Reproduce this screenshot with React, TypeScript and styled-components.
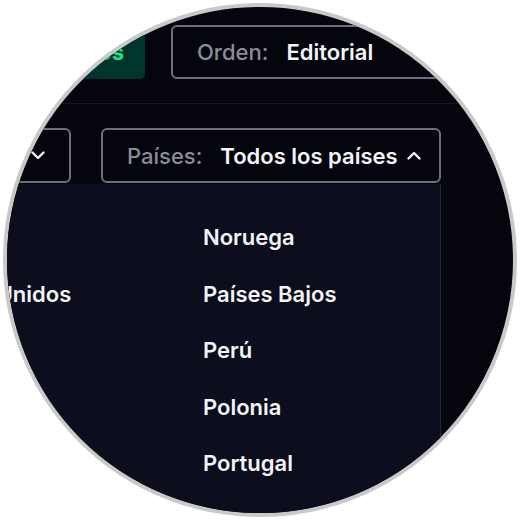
import React from "react";
import styled, { createGlobalStyle } from "styled-components";

const GlobalStyle = createGlobalStyle`
  body {
    margin: 0;
    background: #ffffff;
    font-family: Inter, "Noto Sans", "Liberation Sans", sans-serif;
  }
  * {
    box-sizing: border-box;
  }
`;

const Frame = styled.div`
  width: 514px;
  height: 514px;
  margin: 3px;
  border-radius: 50%;
  border: 4px solid #c9c9c9;
  overflow: hidden;
  background: #05050d;
`;

// the screenshot is a crop of a wider page, so the stage starts left of the circle
const Stage = styled.div`
  width: 720px;
  margin-left: -207px;
  padding-top: 18px;
  display: flex;
  flex-direction: column;
`;

const Row = styled.div<{ $gap: number }>`
  display: flex;
  align-items: stretch;
  gap: ${(p) => p.$gap}px;
`;

const Divider = styled.div`
  height: 1px;
  width: 100%;
  background: #161622;
  margin: 24px 0 24px;
`;

const Pill = styled.button<{ $w: number }>`
  height: 54px;
  width: ${(p) => p.$w}px;
  border-radius: 5px;
  border: none;
  background: #00352d;
  color: #1fe390;
  font-family: inherit;
  font-size: 22px;
  font-weight: 700;
  display: flex;
  align-items: center;
  justify-content: flex-end;
  padding: 0 21px;
`;

const Select = styled.div<{ $w: number; $h: number }>`
  height: ${(p) => p.$h}px;
  width: ${(p) => p.$w}px;
  border: 2px solid #6f6f7d;
  border-radius: 6px;
  display: flex;
  align-items: center;
  padding: 0 24px;
  color: #f2f2f7;
  font-size: 22px;
  font-weight: 600;
  white-space: nowrap;
`;

const Label = styled.span`
  color: #8c8c98;
  font-weight: 500;
  margin-right: 18px;
`;

const Value = styled.span`
  color: #f4f4f8;
`;

const Chevron = styled.svg`
  margin-left: 9px;
  flex: none;
`;

const Spacer = styled.div`
  flex: 1;
`;

const Panel = styled.div`
  margin-top: 1px;
  width: 641px;
  height: 400px;
  background: #0c0d1d;
  border-right: 1px solid #262636;
  display: grid;
  grid-template-columns: 297px 1fr;
  grid-auto-rows: 56.5px;
  padding: 25px 0 0 106px;
`;

const Item = styled.div`
  display: flex;
  align-items: center;
  color: #f4f4f8;
  font-size: 22px;
  font-weight: 600;
  white-space: nowrap;
`;

const ChevronIcon = ({ up }: { up?: boolean }) => (
  <Chevron width="14" height="9" viewBox="0 0 14 9">
    <path
      d={up ? "M1.5 7.5 L7 2 L12.5 7.5" : "M1.5 1.5 L7 7 L12.5 1.5"}
      fill="none"
      stroke="#f4f4f8"
      strokeWidth="2.4"
      strokeLinecap="round"
      strokeLinejoin="round"
    />
  </Chevron>
);

const rows = [
  ["España", "Noruega"],
  ["Estados Unidos", "Países Bajos"],
  ["Estonia", "Perú"],
  ["Filipinas", "Polonia"],
  ["Finlandia", "Portugal"],
];

export default function App() {
  return (
    <>
      <GlobalStyle />
      <Frame>
        <Stage>
          <Row $gap={26}>
            <Pill $w={345}>Todos</Pill>
            <Select $w={340} $h={54}>
              <Label>Orden:</Label>
              <Value>Editorial</Value>
            </Select>
          </Row>
          <Divider />
          <Row $gap={30}>
            <Select $w={271} $h={55}>
              <Label>Idioma:</Label>
              <Value>Todos</Value>
              <Spacer />
              <ChevronIcon />
            </Select>
            <Select $w={340} $h={55}>
              <Label>Países:</Label>
              <Value>Todos los países</Value>
              <Spacer />
              <ChevronIcon up />
            </Select>
          </Row>
          <Panel>
            {rows.map(([a, b]) => (
              <React.Fragment key={b}>
                <Item>{a}</Item>
                <Item>{b}</Item>
              </React.Fragment>
            ))}
          </Panel>
        </Stage>
      </Frame>
    </>
  );
}
